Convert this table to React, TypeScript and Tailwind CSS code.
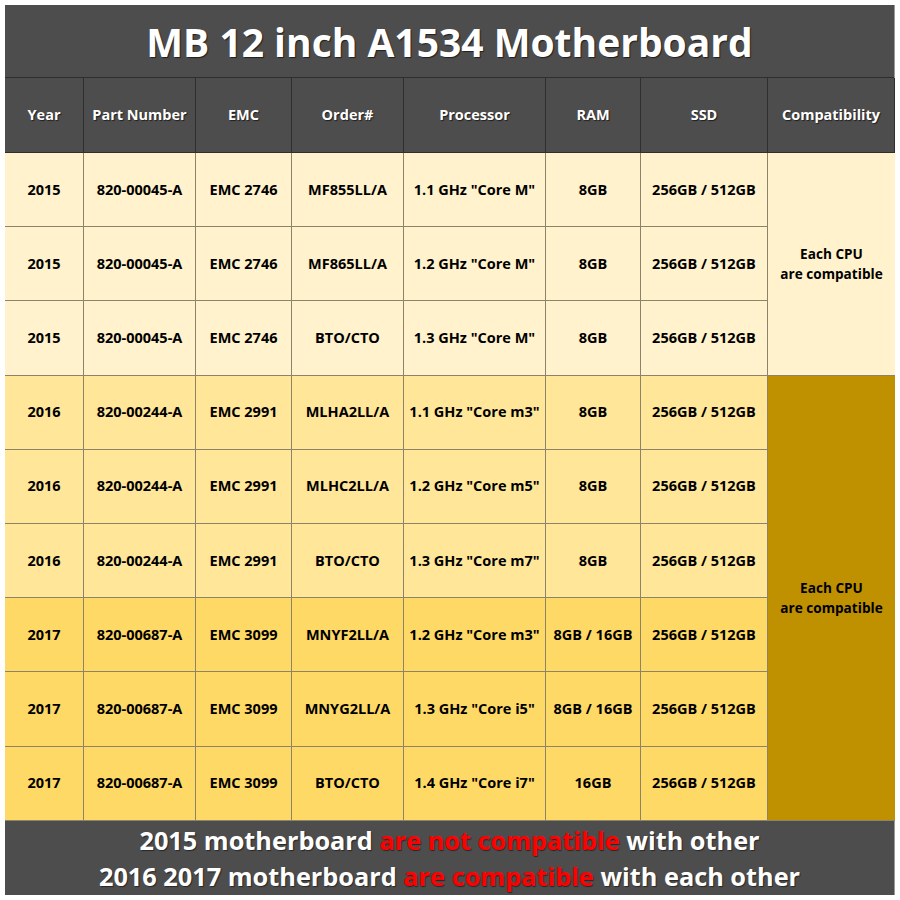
import React from "react";

const cols = "grid-cols-[79px_112px_96px_112px_142px_95px_127px_127px]";

type Row = { y: string; p: string; e: string; o: string; c: string; r: string; bg: string };

const rows: Row[] = [
  { y: "2015", p: "820-00045-A", e: "EMC 2746", o: "MF855LL/A", c: '1.1 GHz "Core M"', r: "8GB", bg: "bg-[#fff2cc]" },
  { y: "2015", p: "820-00045-A", e: "EMC 2746", o: "MF865LL/A", c: '1.2 GHz "Core M"', r: "8GB", bg: "bg-[#fff2cc]" },
  { y: "2015", p: "820-00045-A", e: "EMC 2746", o: "BTO/CTO", c: '1.3 GHz "Core M"', r: "8GB", bg: "bg-[#fff2cc]" },
  { y: "2016", p: "820-00244-A", e: "EMC 2991", o: "MLHA2LL/A", c: '1.1 GHz "Core m3"', r: "8GB", bg: "bg-[#ffe699]" },
  { y: "2016", p: "820-00244-A", e: "EMC 2991", o: "MLHC2LL/A", c: '1.2 GHz "Core m5"', r: "8GB", bg: "bg-[#ffe699]" },
  { y: "2016", p: "820-00244-A", e: "EMC 2991", o: "BTO/CTO", c: '1.3 GHz "Core m7"', r: "8GB", bg: "bg-[#ffe699]" },
  { y: "2017", p: "820-00687-A", e: "EMC 3099", o: "MNYF2LL/A", c: '1.2 GHz "Core m3"', r: "8GB / 16GB", bg: "bg-[#ffd966]" },
  { y: "2017", p: "820-00687-A", e: "EMC 3099", o: "MNYG2LL/A", c: '1.3 GHz "Core i5"', r: "8GB / 16GB", bg: "bg-[#ffd966]" },
  { y: "2017", p: "820-00687-A", e: "EMC 3099", o: "BTO/CTO", c: '1.4 GHz "Core i7"', r: "16GB", bg: "bg-[#ffd966]" },
];

const headers = ["Year", "Part Number", "EMC", "Order#", "Processor", "RAM", "SSD", "Compatibility"];

export default function App() {
  return (
    <div className="w-[900px] h-[900px] bg-white p-[5px] font-['Open_Sans','Noto_Sans',sans-serif]">
      <div className="w-[890px] h-[890px] flex flex-col border-r border-[#9a9a9a]">
        <div className="h-[73px] bg-[#4d4d4d] flex items-center justify-center border-b border-[#2e2e2e]">
          <span className="text-white font-bold text-[39px] leading-none [text-shadow:1px_1px_1px_rgba(0,0,0,0.6)]">
            MB 12 inch A1534 Motherboard
          </span>
        </div>
        <div className={`grid ${cols} grid-rows-[75px_repeat(9,74.2px)]`}>
          {headers.map((h) => (
            <div
              key={h}
              className="bg-[#4d4d4d] border-r border-b border-[#2e2e2e] flex items-center justify-center text-white font-bold text-[14.5px] [text-shadow:1px_1px_1px_rgba(0,0,0,0.6)]"
            >
              {h}
            </div>
          ))}
          {rows.map((r, i) => {
            const cells = [r.y, r.p, r.e, r.o, r.c, r.r, "256GB / 512GB"];
            return (
              <React.Fragment key={i}>
                {cells.map((c, j) => (
                  <div
                    key={j}
                    className={`${r.bg} border-r border-b border-[#8c8468] flex items-center justify-center text-black font-bold text-[14.5px] whitespace-nowrap`}
                    style={{ gridRow: i + 2, gridColumn: j + 1 }}
                  >
                    {c}
                  </div>
                ))}
              </React.Fragment>
            );
          })}
          <div className="col-start-8 row-start-2 row-span-3 bg-[#fff2cc] border-b border-[#8c8468] flex flex-col items-center justify-center text-black font-bold text-[13.6px] leading-[20px]">
            <span>Each CPU</span>
            <span>are compatible</span>
          </div>
          <div className="col-start-8 row-start-5 row-span-6 bg-[#bf9000] border-b border-[#8c8468] flex flex-col items-center justify-center text-black font-bold text-[13.6px] leading-[20px]">
            <span>Each CPU</span>
            <span>are compatible</span>
          </div>
        </div>
        <div className="flex-1 bg-[#4d4d4d] flex flex-col items-center justify-center text-white font-bold text-[25.3px] leading-[36px] [text-shadow:1px_1px_1px_rgba(0,0,0,0.5)]">
          <div>
            2015 motherboard <span className="text-[#ff0000]">are not compatible</span> with other
          </div>
          <div>
            2016 2017 motherboard <span className="text-[#ff0000]">are compatible</span> with each other
          </div>
        </div>
      </div>
    </div>
  );
}
